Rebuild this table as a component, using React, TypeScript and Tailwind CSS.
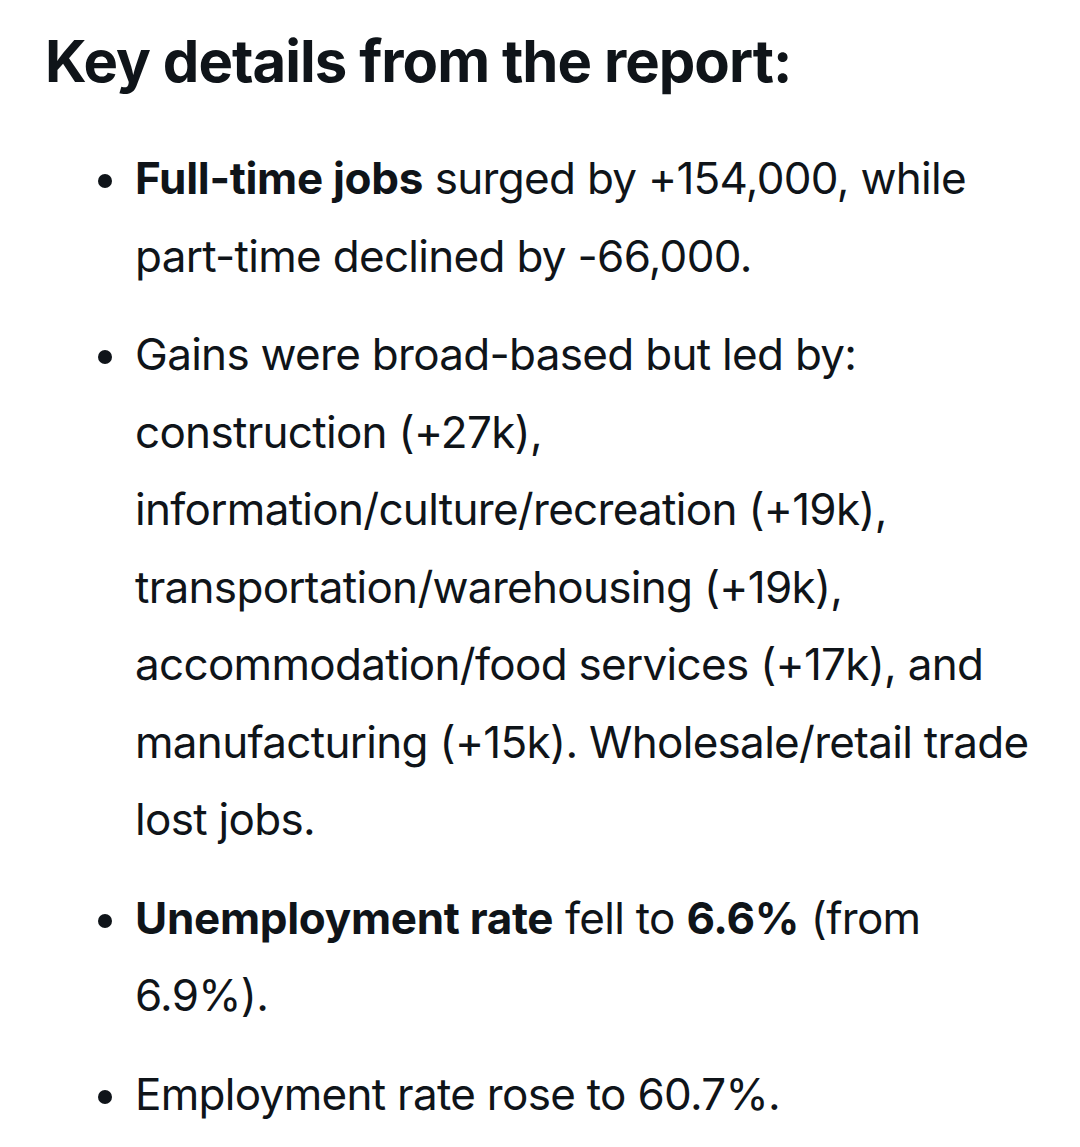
type Item = { lines: React.ReactNode[] };

const items: Item[] = [
  {
    lines: [
      <>
        <strong className="font-bold tracking-[-0.3px]">Full-time jobs</strong> surged by +154,000, while
      </>,
      "part-time declined by -66,000.",
    ],
  },
  {
    lines: [
      "Gains were broad-based but led by:",
      "construction (+27k),",
      "information/culture/recreation (+19k),",
      "transportation/warehousing (+19k),",
      "accommodation/food services (+17k), and",
      "manufacturing (+15k). Wholesale/retail trade",
      "lost jobs.",
    ],
  },
  {
    lines: [
      <>
        <strong className="font-bold tracking-[-0.3px]">Unemployment rate</strong> fell to{" "}
        <strong className="font-bold tracking-[-0.3px]">6.6%</strong> (from
      </>,
      "6.9%).",
    ],
  },
  {
    lines: ["Employment rate rose to 60.7%."],
  },
];

export default function App() {
  return (
    <div className="min-h-[1147px] bg-white pl-[45px] pr-[16px] pt-[26px] font-['Inter',sans-serif] text-[#0f1419]">
      <h1 className="text-[58px] font-bold leading-[70px] tracking-[-0.95px]">
        Key details from the report:
      </h1>
      <ul className="mt-[44px] pl-[53px]">
        {items.map((item, i) => (
          <li key={i} className={`flex ${i > 0 ? "mt-[21px]" : ""}`}>
            <span className="flex h-[77.5px] w-[37px] shrink-0 items-center pt-[5px]">
              <span className="h-[14px] w-[14px] rounded-full bg-[#0f1419]" />
            </span>
            <p className="whitespace-nowrap text-[44px] leading-[77.5px] tracking-[-0.7px]">
              {item.lines.map((line, j) => (
                <span key={j} className="block">
                  {line}
                </span>
              ))}
            </p>
          </li>
        ))}
      </ul>
    </div>
  );
}
